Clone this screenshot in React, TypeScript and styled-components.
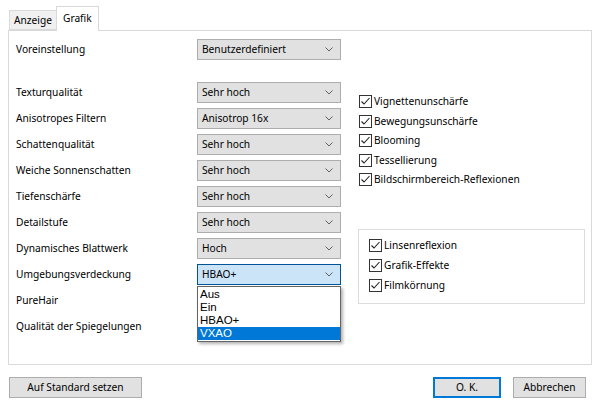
import React from "react";
import styled, { createGlobalStyle } from "styled-components";

const Global = createGlobalStyle`
  html, body { margin: 0; padding: 0; background: #ffffff; }
  body { width: 601px; height: 400px; overflow: hidden; font-family: "Noto Sans", "Open Sans", sans-serif; font-size: 10.2px; color: #000; }
`;

const Window = styled.div`
  width: 601px;
  height: 400px;
  display: flex;
  flex-direction: column;
  box-sizing: border-box;
`;

const TabStrip = styled.div`
  display: flex;
  align-items: flex-end;
  height: 30px;
  padding-left: 9px;
  position: relative;
  z-index: 2;
`;

const Tab = styled.div<{ $active?: boolean }>`
  box-sizing: border-box;
  height: ${(p) => (p.$active ? 25 : 20)}px;
  margin-bottom: ${(p) => (p.$active ? -1 : 0)}px;
  padding: 0 ${(p) => (p.$active ? 6 : 4)}px;
  display: flex;
  align-items: flex-start;
  padding-top: ${(p) => (p.$active ? 3 : 1)}px;
  background: ${(p) => (p.$active ? "#ffffff" : "#f0f0f0")};
  border: 1px solid #d9d9d9;
  border-bottom: ${(p) => (p.$active ? "none" : "1px solid #d9d9d9")};
  ${(p) => (p.$active ? "" : "border-right: none;")}
  line-height: 16px;
`;

const Panel = styled.div`
  margin: 0 9px 0 8px;
  height: 335px;
  box-sizing: border-box;
  border: 1px solid #d9d9d9;
  background: #fff;
  display: flex;
  padding: 8px 6px 0 7px;
`;

const LeftCol = styled.div`
  width: 342px;
  display: flex;
  flex-direction: column;
`;

const Row = styled.div<{ $gapAfter?: number }>`
  display: flex;
  align-items: center;
  height: 21px;
  margin-bottom: ${(p) => p.$gapAfter ?? 5}px;
`;

const Label = styled.div`
  width: 181px;
  line-height: 16px;
  padding-bottom: 2px;
`;

const SelectWrap = styled.div`
  position: relative;
`;

const SelectBox = styled.div<{ $focused?: boolean }>`
  box-sizing: border-box;
  width: 144px;
  height: 21px;
  display: flex;
  align-items: center;
  justify-content: space-between;
  padding: 0 7px 1px 4px;
  border: 1px solid ${(p) => (p.$focused ? "#005499" : "#adadad")};
  background: ${(p) => (p.$focused ? "#cce4f7" : "#e1e1e1")};
  line-height: 16px;
`;

const DropList = styled.div`
  position: absolute;
  left: 0;
  top: 22px;
  width: 144px;
  box-sizing: border-box;
  border: 1px solid #646464;
  background: #fff;
  padding: 1px 0;
  box-shadow: 2px 2px 3px rgba(0, 0, 0, 0.3);
  z-index: 5;
  font-family: "Liberation Sans", Arial, sans-serif;
  font-size: 11.5px;
`;

const DropItem = styled.div<{ $selected?: boolean }>`
  height: 13px;
  line-height: 13px;
  padding-left: 2px;
  background: ${(p) => (p.$selected ? "#0078d7" : "transparent")};
  color: ${(p) => (p.$selected ? "#fff" : "#000")};
`;

const RightCol = styled.div`
  flex: 1;
  display: flex;
  flex-direction: column;
  padding-top: 53px;
`;

const CheckList = styled.div<{ $rowH: number }>`
  display: flex;
  flex-direction: column;
  --row-h: ${(p) => p.$rowH}px;
`;

const CheckRow = styled.label`
  display: flex;
  align-items: center;
  height: var(--row-h);
  padding-left: 1px;
  gap: 2px;
  line-height: 16px;
`;

const CheckText = styled.span`
  padding-bottom: 1px;
`;

const Box = styled.span`
  width: 13px;
  height: 13px;
  box-sizing: border-box;
  border: 1px solid #333;
  background: #fff;
  display: inline-flex;
  align-items: center;
  justify-content: center;
  flex: none;
`;

const Group = styled.div`
  margin-top: 39px;
  width: 227px;
  height: 75px;
  box-sizing: border-box;
  border: 1px solid #dcdcdc;
  padding: 6px 0 0 9px;
`;

const Footer = styled.div`
  display: flex;
  align-items: center;
  padding: 12px 15px 0 9px;
  gap: 12px;
`;

const Button = styled.button<{ $default?: boolean; $w: number }>`
  width: ${(p) => p.$w}px;
  height: 21px;
  box-sizing: border-box;
  font-family: inherit;
  font-size: inherit;
  color: #000;
  background: #e1e1e1;
  border: ${(p) => (p.$default ? "2px solid #0078d7" : "1px solid #adadad")};
  padding: 0 0 1px;
  line-height: 16px;
`;

const Spacer = styled.div`
  flex: 1;
`;

const Chevron = () => (
  <svg width="8" height="5" viewBox="0 0 8 5">
    <path d="M0.5 0.5 L4 4 L7.5 0.5" fill="none" stroke="#606060" strokeWidth="1" />
  </svg>
);

const Check = () => (
  <svg width="11" height="11" viewBox="0 0 11 11">
    <path d="M1.5 5.5 L4 8 L9.5 2" fill="none" stroke="#222" strokeWidth="1.1" />
  </svg>
);

const rows: [string, string][] = [
  ["Texturqualität", "Sehr hoch"],
  ["Anisotropes Filtern", "Anisotrop 16x"],
  ["Schattenqualität", "Sehr hoch"],
  ["Weiche Sonnenschatten", "Sehr hoch"],
  ["Tiefenschärfe", "Sehr hoch"],
  ["Detailstufe", "Sehr hoch"],
  ["Dynamisches Blattwerk", "Hoch"],
];

const checks1 = [
  "Vignettenunschärfe",
  "Bewegungsunschärfe",
  "Blooming",
  "Tessellierung",
  "Bildschirmbereich-Reflexionen",
];
const checks2 = ["Linsenreflexion", "Grafik-Effekte", "Filmkörnung"];

export default function App() {
  return (
    <Window>
      <Global />
      <TabStrip>
        <Tab>Anzeige</Tab>
        <Tab $active>Grafik</Tab>
      </TabStrip>
      <Panel>
        <LeftCol>
          <Row $gapAfter={22}>
            <Label>Voreinstellung</Label>
            <SelectBox>
              <span>Benutzerdefiniert</span>
              <Chevron />
            </SelectBox>
          </Row>
          {rows.map(([l, v]) => (
            <Row key={l}>
              <Label>{l}</Label>
              <SelectBox>
                <span>{v}</span>
                <Chevron />
              </SelectBox>
            </Row>
          ))}
          <Row>
            <Label>Umgebungsverdeckung</Label>
            <SelectWrap>
              <SelectBox $focused>
                <span>HBAO+</span>
                <Chevron />
              </SelectBox>
              <DropList>
                <DropItem>Aus</DropItem>
                <DropItem>Ein</DropItem>
                <DropItem>HBAO+</DropItem>
                <DropItem $selected>VXAO</DropItem>
              </DropList>
            </SelectWrap>
          </Row>
          <Row>
            <Label>PureHair</Label>
          </Row>
          <Row>
            <Label>Qualität der Spiegelungen</Label>
          </Row>
        </LeftCol>
        <RightCol>
          <CheckList $rowH={19.5}>
            {checks1.map((c) => (
              <CheckRow key={c}>
                <Box>
                  <Check />
                </Box>
                <CheckText>{c}</CheckText>
              </CheckRow>
            ))}
          </CheckList>
          <Group>
            <CheckList $rowH={20}>
              {checks2.map((c) => (
                <CheckRow key={c}>
                  <Box>
                    <Check />
                  </Box>
                  <CheckText>{c}</CheckText>
                </CheckRow>
              ))}
            </CheckList>
          </Group>
        </RightCol>
      </Panel>
      <Footer>
        <Button $w={133}>Auf Standard setzen</Button>
        <Spacer />
        <Button $default $w={68}>O. K.</Button>
        <Button $w={73}>Abbrechen</Button>
      </Footer>
    </Window>
  );
}
